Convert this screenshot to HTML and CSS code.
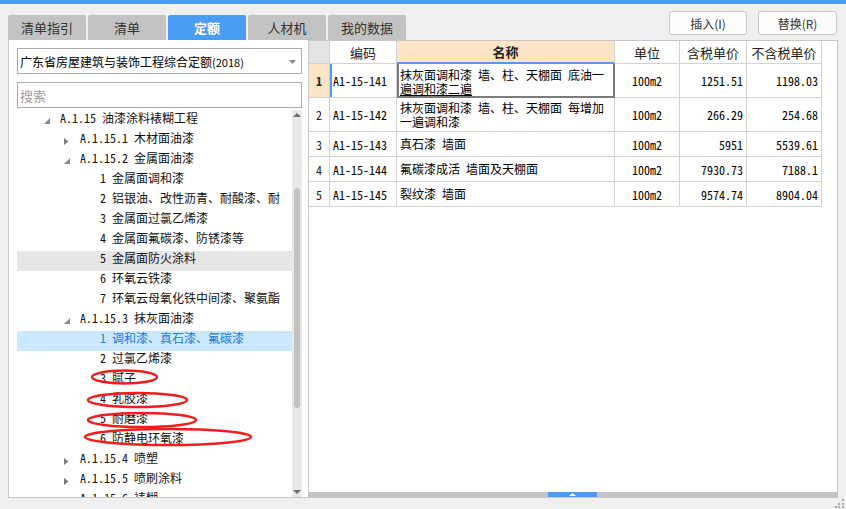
FILE: index.html
```html
<!DOCTYPE html>
<html lang="zh-CN">
<head>
<meta charset="utf-8">
<title>定额</title>
<link rel="stylesheet" href="styles.css">
</head>
<body>
<div class="app">
  <div class="topbar"></div>
  <div class="toolbar">
    <div class="tabs">
      <div class="tab">清单指引</div>
      <div class="tab">清单</div>
      <div class="tab active">定额</div>
      <div class="tab">人材机</div>
      <div class="tab">我的数据</div>
    </div>
    <div class="actions">
      <button class="btn">插入(I)</button>
      <button class="btn btn-wide">替换(R)</button>
    </div>
  </div>
  <div class="content">
    <div class="left">
      <div class="select">
        <span class="select-text">广东省房屋建筑与装饰工程综合定额<span class="year">(2018)</span></span>
        <svg class="caret" width="7" height="4" viewBox="0 0 7 4"><polygon points="0,0 7,0 3.5,4" fill="#8c8c8c"/></svg>
      </div>
      <div class="search">搜索</div>
      <div class="tree">
        <div class="tree-rows">
          <div class="row l0"><span class="arr"><svg width="6" height="6" viewBox="0 0 6 6"><polygon points="6,0 6,6 0,6" fill="#8a8a8a"/></svg></span><span class="t">A.1.15 油漆涂料裱糊工程</span></div>
          <div class="row l1"><span class="arr"><svg width="5" height="7" viewBox="0 0 5 7"><polygon points="0,0 4.5,3.5 0,7" fill="#7a7a7a"/></svg></span><span class="t">A.1.15.1 木材面油漆</span></div>
          <div class="row l1"><span class="arr"><svg width="6" height="6" viewBox="0 0 6 6"><polygon points="6,0 6,6 0,6" fill="#8a8a8a"/></svg></span><span class="t">A.1.15.2 金属面油漆</span></div>
          <div class="row l2"><span class="t">1 金属面调和漆</span></div>
          <div class="row l2"><span class="t">2 铝银油、改性沥青、耐酸漆、耐</span></div>
          <div class="row l2"><span class="t">3 金属面过氯乙烯漆</span></div>
          <div class="row l2"><span class="t">4 金属面氟碳漆、防锈漆等</span></div>
          <div class="row l2 hover"><span class="t">5 金属面防火涂料</span></div>
          <div class="row l2"><span class="t">6 环氧云铁漆</span></div>
          <div class="row l2"><span class="t">7 环氧云母氧化铁中间漆、聚氨酯</span></div>
          <div class="row l1"><span class="arr"><svg width="6" height="6" viewBox="0 0 6 6"><polygon points="6,0 6,6 0,6" fill="#8a8a8a"/></svg></span><span class="t">A.1.15.3 抹灰面油漆</span></div>
          <div class="row l2 selected"><span class="t">1 调和漆、真石漆、氟碳漆</span></div>
          <div class="row l2"><span class="t">2 过氯乙烯漆</span></div>
          <div class="row l2"><span class="t">3 腻子</span></div>
          <div class="row l2"><span class="t">4 乳胶漆</span></div>
          <div class="row l2"><span class="t">5 耐磨漆</span></div>
          <div class="row l2"><span class="t">6 防静电环氧漆</span></div>
          <div class="row l1"><span class="arr"><svg width="5" height="7" viewBox="0 0 5 7"><polygon points="0,0 4.5,3.5 0,7" fill="#7a7a7a"/></svg></span><span class="t">A.1.15.4 喷塑</span></div>
          <div class="row l1"><span class="arr"><svg width="5" height="7" viewBox="0 0 5 7"><polygon points="0,0 4.5,3.5 0,7" fill="#7a7a7a"/></svg></span><span class="t">A.1.15.5 喷刷涂料</span></div>
          <div class="row l1"><span class="arr"><svg width="5" height="7" viewBox="0 0 5 7"><polygon points="0,0 4.5,3.5 0,7" fill="#7a7a7a"/></svg></span><span class="t">A.1.15.6 裱糊</span></div>
        </div>
        <div class="vscroll">
          <div class="sarrow"><svg width="8" height="4" viewBox="0 0 8 4"><polygon points="4,0 8,4 0,4" fill="#6c6c76"/></svg></div>
          <div class="strack"><div class="sthumb"></div></div>
          <div class="sarrow"><svg width="8" height="4" viewBox="0 0 8 4"><polygon points="0,0 8,0 4,4" fill="#6c6c76"/></svg></div>
        </div>
      </div>
    </div>
    <div class="gridpanel">
      <div class="grid">
        <div class="c h rn"></div>
        <div class="c h">编码</div>
        <div class="c h name-h">名称</div>
        <div class="c h">单位</div>
        <div class="c h">含税单价</div>
        <div class="c h">不含税单价</div>

        <div class="c rn rn-cur">1</div>
        <div class="c code code-cur">A1-15-141</div>
        <div class="c name editing"><div class="name-text underline-2">抹灰面调和漆 墙、柱、天棚面 底油一遍调和漆二遍</div></div>
        <div class="c unit">100m2</div>
        <div class="c num">1251.51</div>
        <div class="c num">1198.03</div>

        <div class="c rn">2</div>
        <div class="c code">A1-15-142</div>
        <div class="c name"><div class="name-text">抹灰面调和漆 墙、柱、天棚面 每增加一遍调和漆</div></div>
        <div class="c unit">100m2</div>
        <div class="c num">266.29</div>
        <div class="c num">254.68</div>

        <div class="c rn">3</div>
        <div class="c code">A1-15-143</div>
        <div class="c name"><div class="name-text">真石漆 墙面</div></div>
        <div class="c unit">100m2</div>
        <div class="c num">5951</div>
        <div class="c num">5539.61</div>

        <div class="c rn">4</div>
        <div class="c code">A1-15-144</div>
        <div class="c name"><div class="name-text">氟碳漆成活 墙面及天棚面</div></div>
        <div class="c unit">100m2</div>
        <div class="c num">7930.73</div>
        <div class="c num">7188.1</div>

        <div class="c rn">5</div>
        <div class="c code">A1-15-145</div>
        <div class="c name"><div class="name-text">裂纹漆 墙面</div></div>
        <div class="c unit">100m2</div>
        <div class="c num">9574.74</div>
        <div class="c num">8904.04</div>
      </div>
      <div class="grid-fill"></div>
      <div class="hscroll">
        <div class="hthumb"><svg width="7" height="3" viewBox="0 0 7 3"><polygon points="3.5,0 7,3 0,3" fill="#ffffff"/></svg></div>
      </div>
    </div>
  </div>
  <div class="statusbar">
    <svg class="grip" width="10" height="10" viewBox="0 0 10 10">
      <rect x="7" y="1" width="2" height="2" fill="#a9a9a9"/>
      <rect x="3" y="5" width="2" height="2" fill="#a9a9a9"/>
      <rect x="7" y="5" width="2" height="2" fill="#a9a9a9"/>
      <rect x="0" y="8" width="2" height="2" fill="#a9a9a9"/>
      <rect x="3" y="8" width="2" height="2" fill="#a9a9a9"/>
      <rect x="7" y="8" width="2" height="2" fill="#a9a9a9"/>
    </svg>
  </div>
</div>
<svg class="annot" width="846" height="509" viewBox="0 0 846 509">
  <ellipse cx="124.5" cy="377" rx="32.5" ry="6.5" fill="none" stroke="#f31b1b" stroke-width="2.5"/>
  <ellipse cx="137.5" cy="400" rx="49.5" ry="7" fill="none" stroke="#f31b1b" stroke-width="2.5"/>
  <ellipse cx="142" cy="420" rx="54" ry="7" fill="none" stroke="#f31b1b" stroke-width="2.5"/>
  <ellipse cx="168" cy="437" rx="83" ry="8" fill="none" stroke="#f31b1b" stroke-width="2.5"/>
</svg>
</body>
</html>
```

FILE: styles.css
```css
* { box-sizing: border-box; }

html, body {
  margin: 0;
  padding: 0;
}

body {
  background: #f0f0f0;
  font-family: "Noto Sans CJK SC", "Noto Sans", sans-serif;
  color: #000;
  position: relative;
  width: 846px;
  height: 509px;
  overflow: hidden;
}

.app {
  width: 846px;
  height: 509px;
  display: flex;
  flex-direction: column;
}

.topbar {
  height: 4px;
  background: #4a9cf5;
  flex: none;
}

.toolbar {
  height: 36px;
  flex: none;
  display: flex;
  justify-content: space-between;
  padding: 0 9px 0 8px;
}

.tabs {
  display: flex;
  gap: 2px;
  align-self: flex-end;
}

.tab {
  width: 78px;
  height: 25px;
  background: #c3c3c3;
  border-radius: 2px 2px 0 0;
  color: #333;
  font-size: 13px;
  display: flex;
  align-items: center;
  justify-content: center;
}

.tab.active {
  background: #4a9cf5;
  color: #fff;
  font-weight: bold;
}

.actions {
  display: flex;
  gap: 11px;
  margin-top: 7px;
}

.btn {
  width: 78px;
  height: 24px;
  background: #fcfcfc;
  border: 1px solid #c6c6c6;
  border-radius: 3px;
  font-family: "Noto Sans CJK SC", sans-serif;
  font-size: 12px;
  color: #333;
  padding: 0;
}

.btn-wide { width: 79px; }

.content {
  height: 458px;
  flex: none;
  display: flex;
  padding-left: 8px;
}

.left {
  width: 300px;
  height: 458px;
  background: #fff;
  border-left: 1px solid #c8c8c8;
  border-bottom: 1px solid #c8c8c8;
  padding: 8px 6px 0 8px;
  display: flex;
  flex-direction: column;
}

.select {
  height: 26px;
  border: 1px solid #adadad;
  display: flex;
  align-items: center;
  justify-content: space-between;
  padding: 0 5px 0 2px;
  font-size: 12px;
  flex: none;
}

.select-text { white-space: nowrap; }

.year { font-size: 11px; }

.caret { margin-top: 1px; }

.search {
  margin-top: 8px;
  height: 26px;
  border: 1px solid #adadad;
  color: #9d9d9d;
  font-size: 13px;
  padding-left: 2px;
  display: flex;
  align-items: center;
  flex: none;
}

.tree {
  flex: 1;
  display: flex;
  min-height: 0;
}

.tree-rows {
  flex: 1;
  padding-top: 3px;
  overflow: hidden;
  font-family: "Noto Sans Mono CJK SC", "Noto Sans CJK SC", monospace;
  font-size: 12px;
}

.row {
  height: 20px;
  white-space: nowrap;
  display: flex;
  align-items: center;
  color: #111;
}

.row .t {
  line-height: 14px;
  padding-bottom: 6px;
}

.row.l0 { padding-left: 27px; }
.row.l1 { padding-left: 47px; }
.row.l2 { padding-left: 83px; }

.arr {
  width: 16px;
  flex: none;
  display: flex;
  align-items: center;
  height: 20px;
}

.row.hover { background: #e6e6e6; }

.row.selected {
  background: #cce8ff;
  color: #1b7ae0;
}

.vscroll {
  width: 10px;
  flex: none;
  margin-top: 2px;
  background: #e8e8e8;
  display: flex;
  flex-direction: column;
}

.sarrow {
  height: 10px;
  display: flex;
  align-items: center;
  justify-content: center;
  flex: none;
}

.strack {
  flex: 1;
  padding-top: 68px;
  display: flex;
  justify-content: center;
}

.sthumb {
  width: 6px;
  height: 220px;
  background: #c2c2c2;
  border-radius: 3px;
}

.gridpanel {
  width: 530px;
  height: 458px;
  border: 1px solid #c8c8c8;
  background: #fff;
  display: flex;
  flex-direction: column;
}

.grid {
  display: grid;
  grid-template-columns: 21px 67px 218px 65px 67px 75px;
  grid-template-rows: 23px 34px 34px 25px 25px 25px;
  font-family: "Noto Sans Mono CJK SC", "Noto Sans CJK SC", monospace;
  font-size: 12px;
  width: 513px;
}

.c {
  border-right: 1px solid #d3d3d3;
  border-bottom: 1px solid #d3d3d3;
  display: flex;
  align-items: center;
  padding: 0 3px;
  white-space: nowrap;
  overflow: hidden;
}

.c.h {
  font-family: "Noto Sans CJK SC", sans-serif;
  font-size: 13px;
  justify-content: center;
  color: #222;
}

.c.h.rn { background: #e4e4e4; }

.c.name-h {
  background: #fde4c6;
  font-weight: bold;
  border-bottom: 2px solid #4a9cf5;
}

.c.rn {
  justify-content: center;
  padding: 0;
  color: #222;
}

.c.rn-cur {
  background: #fde4c6;
  font-weight: bold;
}

.c.code-cur {
  box-shadow: inset 2px 0 0 #4a9cf5;
}

.c.name {
  white-space: normal;
}

.name-text {
  line-height: 14px;
  width: 100%;
}

.c.editing {
  border-right: 2px solid #7b7b7b;
  border-bottom: 2px solid #7b7b7b;
  box-shadow: inset 2px 0 0 #7b7b7b;
  padding-top: 3px;
}

.underline-2 {
  background: linear-gradient(#000, #000) no-repeat 0 27px / 72px 1px;
}

.c.unit { justify-content: center; }

.c.num { justify-content: flex-end; }

.grid-fill { flex: 1; }

.hscroll {
  height: 5px;
  background: #c4c4c4;
  flex: none;
  padding-left: 239px;
}

.hthumb {
  width: 49px;
  height: 5px;
  background: #4a9cf5;
  display: flex;
  align-items: center;
  justify-content: center;
}

.statusbar {
  flex: 1;
  display: flex;
  justify-content: flex-end;
  align-items: flex-end;
  padding: 0 1px 1px 0;
}

.annot {
  position: absolute;
  left: 0;
  top: 0;
  pointer-events: none;
}
```
